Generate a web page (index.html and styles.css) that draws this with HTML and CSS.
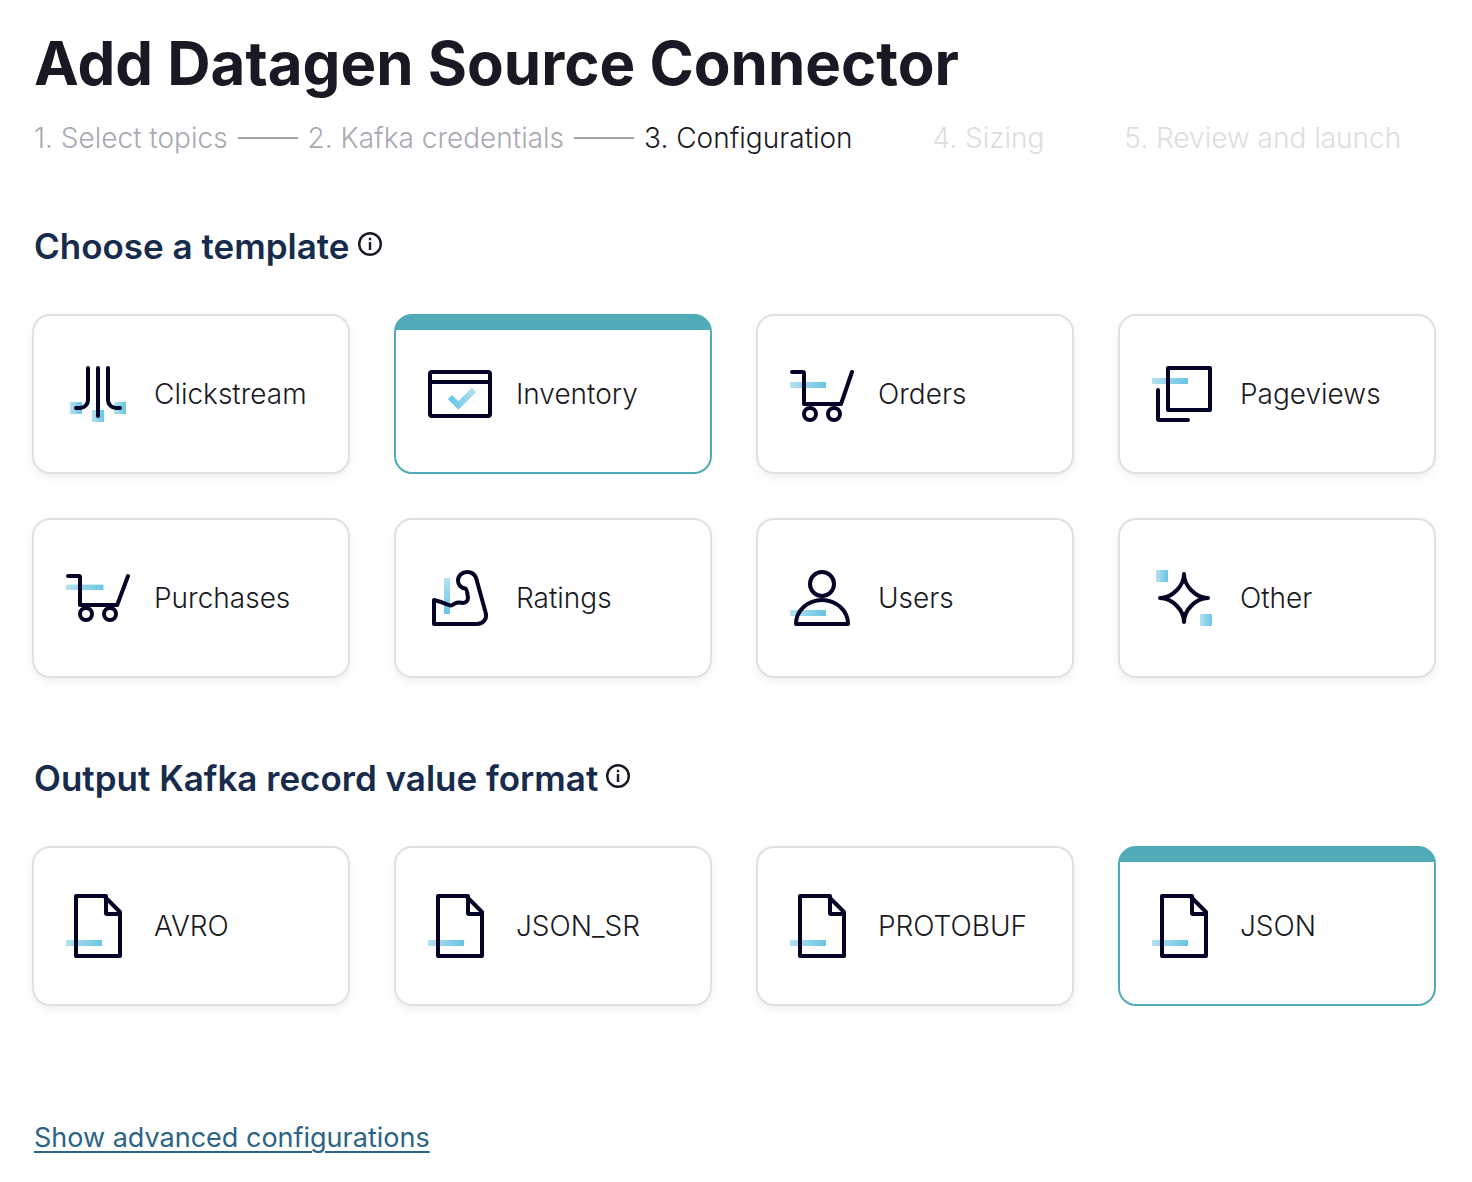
FILE: index.html
```html
<!DOCTYPE html>
<html lang="en">
<head>
<meta charset="utf-8">
<meta name="viewport" content="width=device-width, initial-scale=1">
<title>Add Datagen Source Connector</title>
<link rel="stylesheet" href="styles.css">
</head>
<body>
<svg class="defs" aria-hidden="true">
  <defs>
    <linearGradient id="across" x1="0" y1="0" x2="1" y2="0"><stop offset="0" stop-color="#b4e1f0"/><stop offset="1" stop-color="#68c5e3"/></linearGradient>
    <linearGradient id="down" x1="0" y1="0" x2="0" y2="1"><stop offset="0" stop-color="#b4e1f0"/><stop offset="1" stop-color="#68c5e3"/></linearGradient>
    <linearGradient id="tick" gradientUnits="userSpaceOnUse" x1="10" y1="20" x2="24" y2="16"><stop offset="0" stop-color="#5fc3e4"/><stop offset="1" stop-color="#b4e1f0"/></linearGradient>
    <symbol id="file" viewBox="0 0 32 32">
      <rect class="tint" x="0" y="23" width="18" height="3"/>
      <path d="M20 1H5V31H27V9L19.500 1.500M20 1V9.500Q20 10 20.500 10H27"/>
    </symbol>
    <symbol id="info" viewBox="0 0 24 24">
      <circle cx="12" cy="12" r="10.800"/>
      <path d="M12 10V18M12 5.800V8.200"/>
    </symbol>
  </defs>
</svg>
<main class="page">
  <h1 class="title">Add Datagen Source Connector</h1>
  <ol class="steps">
    <li class="step step-done">1. Select topics</li>
    <li class="step step-done">2. Kafka credentials</li>
    <li class="step step-current" aria-current="step">3. Configuration</li>
    <li class="step step-next">4. Sizing</li>
    <li class="step step-next">5. Review and launch</li>
  </ol>

  <section class="group" role="radiogroup" aria-labelledby="template-heading">
    <div class="heading">
      <h2 class="heading-text" id="template-heading">Choose a template</h2>
      <button class="info" type="button" aria-label="About templates"><svg class="info-icon"><use href="#info"/></svg></button>
    </div>
    <div class="cards">
      <label class="card"><input class="radio" type="radio" name="template">
        <svg class="icon" viewBox="0 0 32 32"><rect class="tint" x="2" y="20" width="6" height="6"/><rect class="tint" x="13" y="24" width="6" height="6"/><rect class="tint" x="24" y="20" width="6" height="6"/><path d="M11 3V19A4 4 0 0 1 7 23H5M16 3V27M21 3V19A4 4 0 0 0 25 23H27"/></svg>
        <span>Clickstream</span></label>
      <label class="card"><input class="radio" type="radio" name="template" checked>
        <svg class="icon" viewBox="0 0 32 32"><path class="tick" d="M11 17.500L15.200 21.700L23 14"/><rect x="1" y="5" width="30" height="22" rx="1"/><path d="M1 10H31"/></svg>
        <span>Inventory</span></label>
      <label class="card"><input class="radio" type="radio" name="template">
        <svg class="icon" viewBox="0 0 32 32"><rect class="tint" x="0" y="10" width="18" height="3"/><path d="M1 5H6.400Q7 5 7 5.600V21H25.500L31 5"/><circle cx="10" cy="26" r="3"/><circle cx="22" cy="26" r="3"/></svg>
        <span>Orders</span></label>
      <label class="card"><input class="radio" type="radio" name="template">
        <svg class="icon" viewBox="0 0 32 32"><rect class="tint" x="0" y="8" width="18" height="3"/><rect x="8" y="3" width="21" height="21"/><path d="M3 14V28.500Q3 29 3.500 29H18"/></svg>
        <span>Pageviews</span></label>
      <label class="card"><input class="radio" type="radio" name="template">
        <svg class="icon" viewBox="0 0 32 32"><rect class="tint" x="0" y="9.300" width="18.700" height="2.700"/><path d="M1 5H6.400Q7 5 7 5.600V19.500H25.600L31 5"/><circle cx="10" cy="24" r="3"/><circle cx="22" cy="24" r="3"/></svg>
        <span>Purchases</span></label>
      <label class="card"><input class="radio" type="radio" name="template">
        <svg class="icon" viewBox="0 0 32 32"><rect class="tint-down" x="8" y="6" width="3" height="18"/><path d="M3 17V29H24.500C27.500 29 29.600 26.500 28.900 23.600L24.200 6.500C23.600 4.400 21.800 3 19.500 3C17 3 15 4.900 15 7.300C15 9.500 16.500 11 18.700 11.200Q19.500 12 19.600 13.300L20 16C20 17.700 18.500 18.800 16.800 18.400Q14.800 18 13.500 18.700L12.400 19.400Q11.300 20 10 19.400C7.500 18.200 5.500 17.600 3 17Z"/></svg>
        <span>Ratings</span></label>
      <label class="card"><input class="radio" type="radio" name="template">
        <svg class="icon" viewBox="0 0 32 32"><rect class="tint" x="0" y="22" width="18" height="3"/><circle cx="16" cy="9" r="6"/><path d="M3 29C3 22.400 8.800 17 16 17S29 22.400 29 29Z"/></svg>
        <span>Users</span></label>
      <label class="card"><input class="radio" type="radio" name="template">
        <svg class="icon" viewBox="0 0 32 32"><rect class="tint" x="2" y="2" width="6" height="6"/><rect class="tint" x="24" y="24" width="6" height="6"/><path d="M16 4C16 10 10 16 4 16C10 16 16 22 16 28C16 22 22 16 28 16C22 16 16 10 16 4Z"/></svg>
        <span>Other</span></label>
    </div>
  </section>

  <section class="group group-format" role="radiogroup" aria-labelledby="format-heading">
    <div class="heading">
      <h2 class="heading-text" id="format-heading">Output Kafka record value format</h2>
      <button class="info" type="button" aria-label="About value formats"><svg class="info-icon"><use href="#info"/></svg></button>
    </div>
    <div class="cards">
      <label class="card"><input class="radio" type="radio" name="format"><svg class="icon"><use href="#file"/></svg><span>AVRO</span></label>
      <label class="card"><input class="radio" type="radio" name="format"><svg class="icon"><use href="#file"/></svg><span>JSON_SR</span></label>
      <label class="card"><input class="radio" type="radio" name="format"><svg class="icon"><use href="#file"/></svg><span>PROTOBUF</span></label>
      <label class="card"><input class="radio" type="radio" name="format" checked><svg class="icon"><use href="#file"/></svg><span>JSON</span></label>
    </div>
  </section>

  <a class="advanced" href="#advanced">Show advanced configurations</a>
</main>
</body>
</html>
```

FILE: styles.css
```css
* {
  box-sizing: border-box;
}

body {
  margin: 0;
  background: #fff;
  color: #1a1a1f;
  font: 300 28px/40px Inter, "Liberation Sans", sans-serif;
}

.defs {
  display: block;
  width: 0;
  height: 0;
}

.page {
  padding: 28px 36px 24px 32px;
}

.title {
  margin: 0;
  padding-left: 2px;
  color: #191924;
  font-size: 60px;
  line-height: 70px;
  font-weight: 700;
}

.steps {
  display: flex;
  gap: 10px;
  margin: 20px 0 0;
  padding: 0 0 0 2px;
  list-style: none;
  white-space: nowrap;
}

.step {
  display: flex;
  align-items: center;
  gap: 10px;
}

.step:not(:last-child)::after {
  content: "";
  width: 60px;
  height: 2px;
}

.step-done {
  color: #a9a9b2;
}

.step-done::after {
  background: #a3a3a9;
}

.step-next {
  color: #dddde1;
}

.group {
  margin-top: 64px;
}

.group-format {
  margin-top: 76px;
}

.heading {
  display: flex;
  align-items: flex-start;
  gap: 8px;
  padding-left: 2px;
}

.heading-text {
  margin: 0;
  color: #172b4d;
  font-size: 35px;
  line-height: 48px;
  font-weight: 600;
}

.info {
  margin: 10px 0 0;
  padding: 0;
  border: 0;
  background: none;
  line-height: 0;
  cursor: pointer;
}

.info-icon {
  width: 24px;
  height: 24px;
  fill: none;
  stroke: #191924;
  stroke-width: 2.400;
}

.cards {
  display: grid;
  grid-template-columns: repeat(4, 1fr);
  gap: 44px;
  margin-top: 44px;
}

.card {
  display: flex;
  align-items: center;
  gap: 24px;
  height: 160px;
  padding: 0 32px;
  border: 2px solid #e0e0e0;
  border-radius: 18px;
  background: #fff;
  box-shadow: 0 4px 8px rgba(0, 0, 0, 0.06);
  cursor: pointer;
}

.card:has(:checked) {
  border-color: #50abb7;
  background: linear-gradient(#50abb7 16px, #fff 16px) border-box;
  box-shadow: none;
}

.radio {
  position: absolute;
  opacity: 0;
  pointer-events: none;
}

.icon {
  flex: none;
  width: 64px;
  height: 64px;
  fill: none;
  stroke: #040427;
  stroke-width: 2;
  stroke-linecap: round;
  stroke-linejoin: round;
}

.tint {
  fill: url(#across);
  stroke: none;
}

.tint-down {
  fill: url(#down);
  stroke: none;
}

.tick {
  stroke: url(#tick);
  stroke-width: 3;
  stroke-linecap: butt;
  stroke-linejoin: miter;
}

.advanced {
  display: inline-block;
  margin: 112px 0 0 2px;
  color: #2b6486;
  font-size: 27px;
  font-weight: 400;
  text-decoration-thickness: 2px;
  text-underline-offset: 4px;
}
```
